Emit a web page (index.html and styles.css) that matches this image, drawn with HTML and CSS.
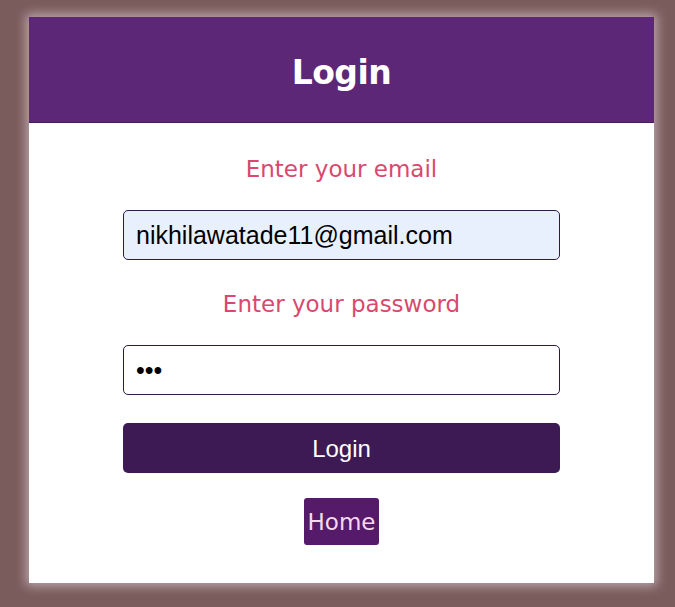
FILE: index.html
```html
<!DOCTYPE html>
<html>
<head>
<meta charset="utf-8">
<link rel="stylesheet" href="styles.css">
</head>
<body>
<div class="card">
  <div class="header"><h1 class="title">Login</h1></div>
  <form class="form">
    <label class="label" for="email">Enter your email</label>
    <input class="field filled" id="email" type="text" value="nikhilawatade11@gmail.com">
    <label class="label" for="pw">Enter your password</label>
    <input class="field" id="pw" type="password" value="abc">
    <button class="submit" type="button">Login</button>
    <a class="home" href="#">Home</a>
  </form>
</div>
</body>
</html>
```
FILE: styles.css
```css
html, body { margin: 0; padding: 0; }
body {
  background: #7b5c5d;
  width: 675px;
  height: 607px;
  overflow: hidden;
}
.card {
  margin: 17px 0 0 29px;
  width: 625px;
  height: 566px;
  background: #ffffff;
  box-shadow: 0 0 10px 3px rgba(230, 215, 225, 0.6);
  display: flex;
  flex-direction: column;
}
.header {
  height: 105px;
  background: #5d2778;
  border-bottom: 1px solid #4a1a60;
  display: flex;
  align-items: center;
  justify-content: center;
}
.title {
  margin: 6px 0 0;
  color: #ffffff;
  font-family: "Comic Sans MS", "DejaVu Sans", sans-serif;
  font-size: 33px;
  font-weight: bold;
  letter-spacing: -0.5px;
}
.form {
  display: flex;
  flex-direction: column;
  align-items: center;
  padding-top: 31px;
}
.label {
  font-family: "Comic Sans MS", "DejaVu Sans", sans-serif;
  font-size: 23px;
  color: #d9486e;
  line-height: 30px;
  height: 30px;
}
.field {
  box-sizing: border-box;
  width: 437px;
  height: 50px;
  margin: 26px 0 29px;
  border: 1px solid #2d1a48;
  border-radius: 5px;
  padding: 0 12px;
  font-family: "Liberation Sans", Arial, sans-serif;
  font-size: 25px;
  color: #000;
  background: #fff;
  outline: none;
}
.field.filled { background: #e8f0fe; }
.submit {
  box-sizing: border-box;
  width: 437px;
  height: 50px;
  margin-top: -1px;
  border: none;
  border-radius: 5px;
  background: #3d1a54;
  color: #ffffff;
  font-family: "Liberation Sans", Arial, sans-serif;
  font-size: 24px;
  padding-top: 2px;
}
.home {
  margin-top: 25px;
  height: 47px;
  padding: 0 4px;
  display: flex;
  align-items: center;
  background: #561a6a;
  border-radius: 3px;
  color: #f6d8ef;
  text-decoration: none;
  font-family: "Comic Sans MS", "DejaVu Sans", sans-serif;
  font-size: 23px;
}
```
